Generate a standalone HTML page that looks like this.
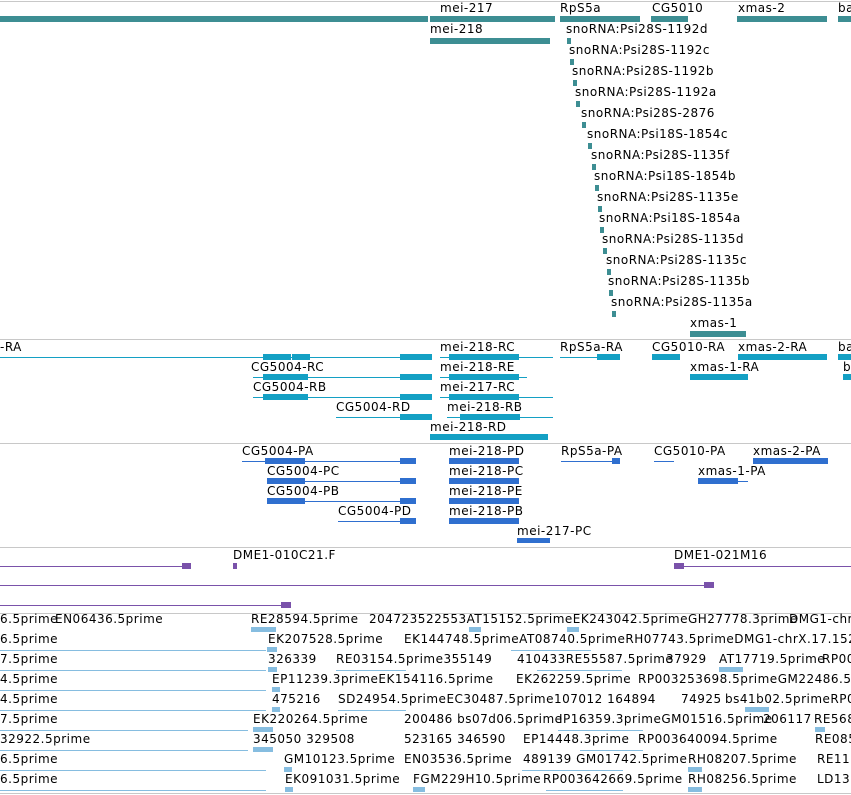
<!DOCTYPE html><html><head><style>
body{margin:0;width:851px;height:795px;background:#fff;position:relative;overflow:hidden;font-family:"DejaVu Sans","Liberation Sans",sans-serif}
.t{position:absolute;font-size:12px;line-height:14px;white-space:nowrap;color:#000;letter-spacing:0.5px}
.l{position:absolute;height:1px}
.b{position:absolute;height:6px}
.s{position:absolute;left:0;width:851px;height:1px;background:#c8c8c8}
.g{background:#3d8e93}.c{background:#14a0c4}.p{background:#2f6fcf}.u{background:#7a52aa}.e{background:#86bde0}
</style></head><body>
<div class="s" style="top:1px"></div><div class="s" style="top:339px"></div><div class="s" style="top:443px"></div><div class="s" style="top:547px"></div><div class="s" style="top:613px"></div><div class="s" style="top:793px"></div>

<div class="b g" style="left:0;top:16px;width:428px"></div>
<div class="t" style="left:440px;top:1px">mei-217</div><div class="b g" style="left:430px;top:16px;width:125px"></div>
<div class="t" style="left:560px;top:1px">RpS5a</div><div class="b g" style="left:560px;top:16px;width:80px"></div>
<div class="t" style="left:652px;top:1px">CG5010</div><div class="b g" style="left:651px;top:16px;width:37px"></div>
<div class="t" style="left:738px;top:1px">xmas-2</div><div class="b g" style="left:737px;top:16px;width:90px"></div>
<div class="t" style="left:838px;top:1px">ba</div><div class="b g" style="left:838px;top:16px;width:13px"></div>
<div class="t" style="left:430px;top:22px">mei-218</div><div class="b g" style="left:430px;top:38px;width:120px"></div>
<div class="t" style="left:566px;top:22px">snoRNA:Psi28S-1192d</div><div class="b g" style="left:567px;top:38px;width:4px"></div>
<div class="t" style="left:569px;top:43px">snoRNA:Psi28S-1192c</div><div class="b g" style="left:570px;top:59px;width:4px"></div>
<div class="t" style="left:572px;top:64px">snoRNA:Psi28S-1192b</div><div class="b g" style="left:573px;top:80px;width:4px"></div>
<div class="t" style="left:575px;top:85px">snoRNA:Psi28S-1192a</div><div class="b g" style="left:576px;top:101px;width:4px"></div>
<div class="t" style="left:581px;top:106px">snoRNA:Psi28S-2876</div><div class="b g" style="left:582px;top:122px;width:4px"></div>
<div class="t" style="left:587px;top:127px">snoRNA:Psi18S-1854c</div><div class="b g" style="left:588px;top:143px;width:4px"></div>
<div class="t" style="left:591px;top:148px">snoRNA:Psi28S-1135f</div><div class="b g" style="left:592px;top:164px;width:4px"></div>
<div class="t" style="left:594px;top:169px">snoRNA:Psi18S-1854b</div><div class="b g" style="left:595px;top:185px;width:4px"></div>
<div class="t" style="left:597px;top:190px">snoRNA:Psi28S-1135e</div><div class="b g" style="left:598px;top:206px;width:4px"></div>
<div class="t" style="left:599px;top:211px">snoRNA:Psi18S-1854a</div><div class="b g" style="left:600px;top:227px;width:4px"></div>
<div class="t" style="left:602px;top:232px">snoRNA:Psi28S-1135d</div><div class="b g" style="left:603px;top:248px;width:4px"></div>
<div class="t" style="left:606px;top:253px">snoRNA:Psi28S-1135c</div><div class="b g" style="left:607px;top:269px;width:4px"></div>
<div class="t" style="left:608px;top:274px">snoRNA:Psi28S-1135b</div><div class="b g" style="left:609px;top:290px;width:4px"></div>
<div class="t" style="left:611px;top:295px">snoRNA:Psi28S-1135a</div><div class="b g" style="left:612px;top:311px;width:4px"></div>
<div class="t" style="left:690px;top:316px">xmas-1</div><div class="b g" style="left:690px;top:331px;width:56px"></div>

<div class="t" style="left:0;top:340px">-RA</div><div class="l c" style="left:0;top:357px;width:432px"></div>
<div class="b c" style="left:263px;top:354px;width:28px"></div><div class="b c" style="left:292px;top:354px;width:18px"></div><div class="b c" style="left:400px;top:354px;width:32px"></div>
<div class="t" style="left:440px;top:340px">mei-218-RC</div><div class="l c" style="left:440px;top:357px;width:113px"></div><div class="b c" style="left:449px;top:354px;width:70px"></div>
<div class="t" style="left:560px;top:340px">RpS5a-RA</div><div class="l c" style="left:560px;top:357px;width:60px"></div><div class="b c" style="left:597px;top:354px;width:23px"></div>
<div class="t" style="left:652px;top:340px">CG5010-RA</div><div class="b c" style="left:652px;top:354px;width:28px"></div>
<div class="t" style="left:738px;top:340px">xmas-2-RA</div><div class="b c" style="left:738px;top:354px;width:89px"></div>
<div class="t" style="left:838px;top:340px">ba</div><div class="b c" style="left:838px;top:354px;width:13px"></div>
<div class="t" style="left:251px;top:360px">CG5004-RC</div><div class="l c" style="left:253px;top:377px;width:179px"></div><div class="b c" style="left:263px;top:374px;width:45px"></div><div class="b c" style="left:400px;top:374px;width:32px"></div>
<div class="t" style="left:440px;top:360px">mei-218-RE</div><div class="l c" style="left:440px;top:377px;width:87px"></div><div class="b c" style="left:449px;top:374px;width:70px"></div>
<div class="t" style="left:690px;top:360px">xmas-1-RA</div><div class="b c" style="left:690px;top:374px;width:58px"></div>
<div class="t" style="left:843px;top:360px">b</div><div class="b c" style="left:843px;top:374px;width:8px"></div>
<div class="t" style="left:253px;top:380px">CG5004-RB</div><div class="l c" style="left:253px;top:397px;width:179px"></div><div class="b c" style="left:263px;top:394px;width:45px"></div><div class="b c" style="left:400px;top:394px;width:32px"></div>
<div class="t" style="left:440px;top:380px">mei-217-RC</div><div class="l c" style="left:440px;top:397px;width:113px"></div><div class="b c" style="left:449px;top:394px;width:70px"></div>
<div class="t" style="left:336px;top:400px">CG5004-RD</div><div class="l c" style="left:336px;top:417px;width:96px"></div><div class="b c" style="left:400px;top:414px;width:32px"></div>
<div class="t" style="left:447px;top:400px">mei-218-RB</div><div class="l c" style="left:447px;top:417px;width:106px"></div><div class="b c" style="left:460px;top:414px;width:60px"></div>
<div class="t" style="left:430px;top:420px">mei-218-RD</div><div class="b c" style="left:430px;top:434px;width:118px"></div>

<div class="t" style="left:242px;top:444px">CG5004-PA</div><div class="l p" style="left:242px;top:461px;width:174px"></div><div class="b p" style="left:265px;top:458px;width:40px"></div><div class="b p" style="left:400px;top:458px;width:16px"></div>
<div class="t" style="left:449px;top:444px">mei-218-PD</div><div class="b p" style="left:449px;top:458px;width:70px"></div>
<div class="t" style="left:561px;top:444px">RpS5a-PA</div><div class="l p" style="left:561px;top:461px;width:59px"></div><div class="b p" style="left:612px;top:458px;width:8px"></div>
<div class="t" style="left:654px;top:444px">CG5010-PA</div><div class="l p" style="left:654px;top:461px;width:20px"></div>
<div class="t" style="left:753px;top:444px">xmas-2-PA</div><div class="b p" style="left:753px;top:458px;width:75px"></div>
<div class="t" style="left:267px;top:464px">CG5004-PC</div><div class="l p" style="left:267px;top:481px;width:149px"></div><div class="b p" style="left:267px;top:478px;width:38px"></div><div class="b p" style="left:400px;top:478px;width:16px"></div>
<div class="t" style="left:449px;top:464px">mei-218-PC</div><div class="b p" style="left:449px;top:478px;width:70px"></div>
<div class="t" style="left:698px;top:464px">xmas-1-PA</div><div class="b p" style="left:698px;top:478px;width:40px"></div><div class="l p" style="left:698px;top:481px;width:50px"></div>
<div class="t" style="left:267px;top:484px">CG5004-PB</div><div class="b p" style="left:267px;top:498px;width:38px"></div><div class="l p" style="left:267px;top:501px;width:149px"></div><div class="b p" style="left:400px;top:498px;width:16px"></div>
<div class="t" style="left:449px;top:484px">mei-218-PE</div><div class="b p" style="left:449px;top:498px;width:70px"></div>
<div class="t" style="left:338px;top:504px">CG5004-PD</div><div class="l p" style="left:338px;top:521px;width:78px"></div><div class="b p" style="left:400px;top:518px;width:16px"></div>
<div class="t" style="left:449px;top:504px">mei-218-PB</div><div class="b p" style="left:449px;top:518px;width:70px"></div>
<div class="t" style="left:517px;top:524px">mei-217-PC</div><div class="l p" style="left:517px;top:541px;width:33px"></div><div class="b p" style="left:517px;top:538px;width:33px;height:5px"></div>

<div class="t" style="left:233px;top:548px">DME1-010C21.F</div><div class="t" style="left:674px;top:548px">DME1-021M16</div>
<div class="l u" style="left:0;top:566px;width:190px"></div><div class="b u" style="left:182px;top:563px;width:9px"></div><div class="b u" style="left:233px;top:563px;width:4px"></div>
<div class="l u" style="left:674px;top:566px;width:177px"></div><div class="b u" style="left:674px;top:563px;width:10px"></div>
<div class="l u" style="left:0;top:585px;width:714px"></div><div class="b u" style="left:704px;top:582px;width:10px"></div>
<div class="l u" style="left:0;top:605px;width:291px"></div><div class="b u" style="left:281px;top:602px;width:10px"></div>

<div class="t" style="left:0;top:612px">6.5prime</div><div class="t" style="left:55px;top:612px">EN06436.5prime</div><div class="t" style="left:251px;top:612px">RE28594.5prime</div><div class="t" style="left:369px;top:612px">204723522553AT15152.5primeEK243042.5primeGH27778.3prime</div><div class="t" style="left:789px;top:612px">DMG1-chr</div>
<div class="t" style="left:0;top:632px">6.5prime</div><div class="t" style="left:268px;top:632px">EK207528.5prime</div><div class="t" style="left:404px;top:632px">EK144748.5primeAT08740.5primeRH07743.5primeDMG1-chrX.17.152.a.5</div>
<div class="t" style="left:0;top:652px">7.5prime</div><div class="t" style="left:268px;top:652px">326339</div><div class="t" style="left:336px;top:652px">RE03154.5prime355149</div><div class="t" style="left:517px;top:652px">410433RE55587.5prime</div><div class="t" style="left:666px;top:652px">37929</div><div class="t" style="left:719px;top:652px">AT17719.5prime</div><div class="t" style="left:822px;top:652px">RP00</div>
<div class="t" style="left:0;top:672px">4.5prime</div><div class="t" style="left:272px;top:672px">EP11239.3primeEK154116.5prime</div><div class="t" style="left:516px;top:672px">EK262259.5prime</div><div class="t" style="left:638px;top:672px">RP003253698.5primeGM22486.5pr</div>
<div class="t" style="left:0;top:692px">4.5prime</div><div class="t" style="left:272px;top:692px">475216</div><div class="t" style="left:338px;top:692px">SD24954.5primeEC30487.5prime107012 164894</div><div class="t" style="left:681px;top:692px">74925</div><div class="t" style="left:725px;top:692px">bs41b02.5primeRP00</div>
<div class="t" style="left:0;top:712px">7.5prime</div><div class="t" style="left:253px;top:712px">EK220264.5prime</div><div class="t" style="left:404px;top:712px">200486 bs07d06.5prime</div><div class="t" style="left:559px;top:712px">IP16359.3primeGM01516.5prime</div><div class="t" style="left:763px;top:712px">206117</div><div class="t" style="left:814px;top:712px">RE568</div>
<div class="t" style="left:0;top:732px">32922.5prime</div><div class="t" style="left:253px;top:732px">345050 329508</div><div class="t" style="left:404px;top:732px">523165 346590</div><div class="t" style="left:523px;top:732px">EP14448.3prime</div><div class="t" style="left:638px;top:732px">RP003640094.5prime</div><div class="t" style="left:815px;top:732px">RE085</div>
<div class="t" style="left:0;top:752px">6.5prime</div><div class="t" style="left:284px;top:752px">GM10123.5prime</div><div class="t" style="left:404px;top:752px">EN03536.5prime</div><div class="t" style="left:523px;top:752px">489139 GM01742.5prime</div><div class="t" style="left:688px;top:752px">RH08207.5prime</div><div class="t" style="left:817px;top:752px">RE116</div>
<div class="t" style="left:0;top:772px">6.5prime</div><div class="t" style="left:285px;top:772px">EK091031.5prime</div><div class="t" style="left:413px;top:772px">FGM229H10.5prime</div><div class="t" style="left:543px;top:772px">RP003642669.5prime</div><div class="t" style="left:688px;top:772px">RH08256.5prime</div><div class="t" style="left:817px;top:772px">LD133</div>

<div class="l e" style="left:0;top:650px;width:266px"></div><div class="l e" style="left:0;top:670px;width:266px"></div><div class="l e" style="left:0;top:690px;width:266px"></div><div class="l e" style="left:0;top:710px;width:266px"></div>
<div class="l e" style="left:0;top:730px;width:248px"></div><div class="l e" style="left:0;top:750px;width:248px"></div><div class="l e" style="left:0;top:770px;width:266px"></div><div class="l e" style="left:0;top:790px;width:266px"></div>
<div class="b e" style="left:251px;top:627px;width:25px;height:5px"></div><div class="b e" style="left:267px;top:647px;width:10px;height:5px"></div><div class="b e" style="left:268px;top:667px;width:9px;height:5px"></div><div class="b e" style="left:272px;top:687px;width:8px;height:5px"></div><div class="b e" style="left:272px;top:707px;width:8px;height:5px"></div><div class="b e" style="left:253px;top:727px;width:20px;height:5px"></div><div class="b e" style="left:253px;top:747px;width:20px;height:5px"></div><div class="b e" style="left:284px;top:767px;width:8px;height:5px"></div><div class="b e" style="left:285px;top:787px;width:8px;height:5px"></div>
<div class="l e" style="left:336px;top:670px;width:70px"></div><div class="l e" style="left:338px;top:710px;width:68px"></div><div class="l e" style="left:511px;top:650px;width:80px"></div><div class="l e" style="left:537px;top:670px;width:85px"></div><div class="l e" style="left:558px;top:730px;width:85px"></div><div class="l e" style="left:522px;top:770px;width:101px"></div><div class="l e" style="left:580px;top:750px;width:63px"></div><div class="l e" style="left:546px;top:790px;width:77px"></div>
<div class="b e" style="left:469px;top:627px;width:12px;height:5px"></div><div class="b e" style="left:567px;top:627px;width:12px;height:5px"></div><div class="b e" style="left:719px;top:667px;width:24px;height:5px"></div><div class="b e" style="left:745px;top:707px;width:24px;height:5px"></div><div class="b e" style="left:688px;top:767px;width:14px;height:5px"></div><div class="b e" style="left:688px;top:787px;width:14px;height:5px"></div><div class="b e" style="left:413px;top:787px;width:12px;height:5px"></div><div class="b e" style="left:815px;top:727px;width:10px;height:5px"></div>
</body></html>
